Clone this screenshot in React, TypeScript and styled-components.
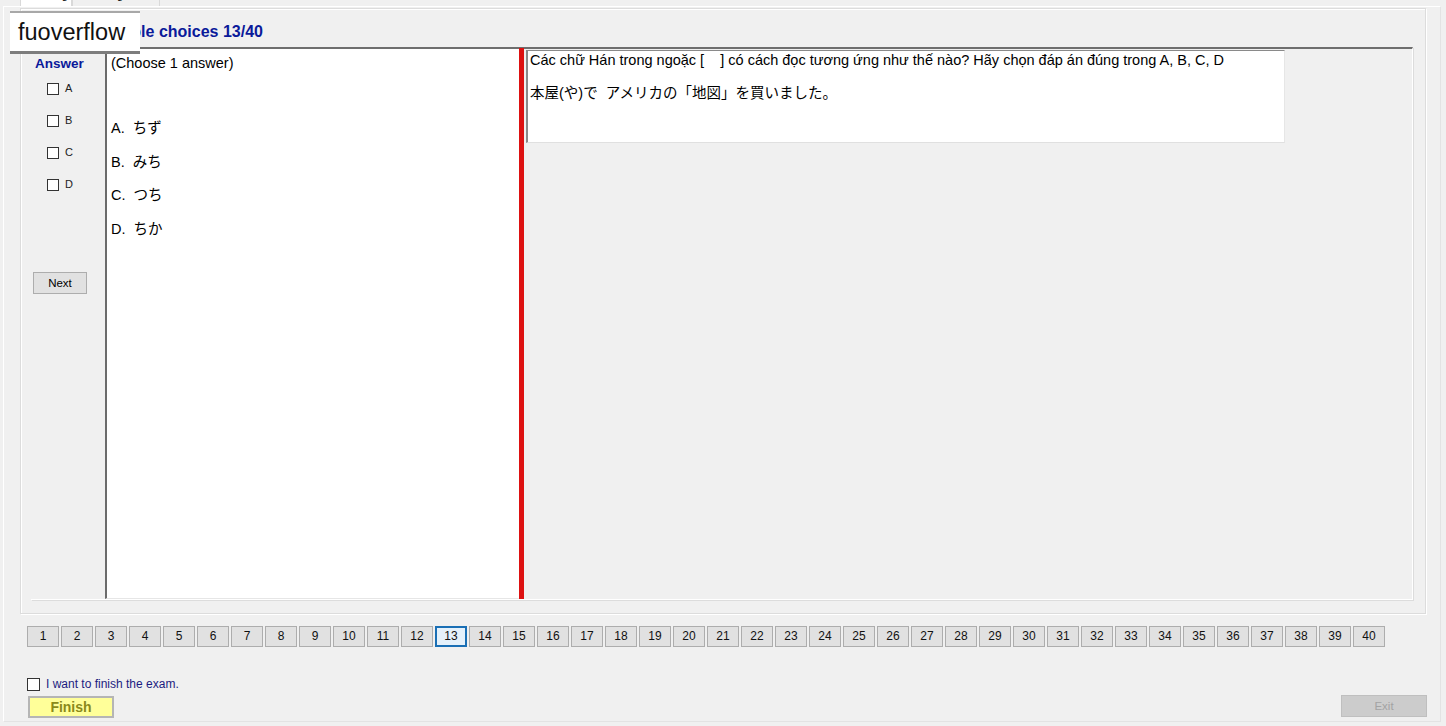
import React from 'react';
import styled, { createGlobalStyle } from 'styled-components';

const GlobalStyle = createGlobalStyle`
  html, body {
    margin: 0;
    padding: 0;
    background: #f0f0f0;
    overflow: hidden;
  }
  body {
    font-family: "Liberation Sans", Arial, "Noto Sans CJK JP", sans-serif;
    color: #000;
  }
`;

const Window = styled.div`
  width: 1446px;
  height: 726px;
  background: #f0f0f0;
  position: relative;
  overflow: hidden;
`;

const TabStrip = styled.div`
  display: flex;
  margin-left: 20px;
  margin-top: -14px;
  height: 20px;
`;

const Tab = styled.div<{ $active?: boolean }>`
  width: ${(p) => (p.$active ? 52 : 88)}px;
  height: 20px;
  box-sizing: border-box;
  border: 1px solid #d9d9d9;
  border-bottom: none;
  background: ${(p) => (p.$active ? '#fff' : '#f0f0f0')};
  font-size: 11px;
  padding: 2px 6px;
  color: #000;
`;

const TabPage = styled.div`
  margin-left: 3px;
  width: 1438px;
  height: 716px;
  box-sizing: border-box;
  border: 1px solid #fff;
  border-right-color: #e3e3e3;
  border-bottom-color: #e3e3e3;
  padding: 1px 0 0 16px;
  display: flex;
  flex-direction: column;
`;

const GroupBox = styled.div`
  width: 1406px;
  height: 606px;
  box-sizing: border-box;
  border: 1px solid #dcdcdc;
  box-shadow: inset 1px 1px 0 #fff, 1px 1px 0 #fff;
  padding: 14px 12px 13px 10px;
  display: flex;
  flex-direction: column;
  position: relative;
`;

const Title = styled.div`
  font-size: 16px;
  font-weight: bold;
  color: #0a1a9a;
  padding-left: 63px;
  height: 24px;
  line-height: 18px;
`;

const Watermark = styled.div`
  position: absolute;
  left: -11px;
  top: 4px;
  width: 130px;
  height: 38px;
  background: #fff;
  box-shadow: 0 -2px 0 #a8a8a8, 0 3px 0 #7d7d7d;
  font-size: 23.5px;
  line-height: 38px;
  padding-left: 8px;
  box-sizing: border-box;
  color: #111;
  z-index: 2;
`;

const Frame = styled.div`
  flex: 1;
  display: flex;
  border-top: 2px solid #6e6e6e;
  border-right: 1px solid #fff;
  border-bottom: 1px solid #fff;
  box-shadow: 1px 1px 0 #dcdcdc;
`;

const AnswerColumn = styled.div`
  width: 72px;
  display: flex;
  flex-direction: column;
  padding-top: 7px;
`;

const AnswerTitle = styled.div`
  font-size: 13.5px;
  font-weight: bold;
  color: #0a1a9a;
  padding-left: 4px;
  height: 26px;
`;

const OptionRow = styled.label`
  display: flex;
  align-items: flex-start;
  gap: 6px;
  padding-left: 16px;
  height: 32px;
  font-size: 11px;
  color: #222;
`;

const Box = styled.span<{ $size?: number }>`
  display: inline-block;
  width: ${(p) => p.$size ?? 12}px;
  height: ${(p) => p.$size ?? 12}px;
  box-sizing: border-box;
  border: 1px solid #333;
  background: #fff;
  margin-top: 1px;
  flex-shrink: 0;
`;

const NextButton = styled.div`
  margin: 62px 0 0 2px;
  width: 54px;
  height: 22px;
  box-sizing: border-box;
  border: 1px solid #adadad;
  background: #e1e1e1;
  font-size: 11.5px;
  text-align: center;
  line-height: 20px;
`;

const QuestionPanel = styled.div`
  width: 414px;
  margin-left: 2px;
  background: #fff;
  border-left: 2px solid #6b6b6b;
  border-bottom: 1px solid #e6e6e6;
  padding: 6px 0 0 4px;
  box-sizing: border-box;
  font-size: 14.5px;
`;

const Choose = styled.div`
  height: 64px;
`;

const ChoiceLine = styled.div`
  height: 33.5px;
  line-height: 18px;
  white-space: pre;
`;

const Divider = styled.div`
  width: 5px;
  margin-top: -1px;
  background: #dd1111;
`;

const RightArea = styled.div`
  flex: 1;
  padding: 1px 0 0 2px;
`;

const QuestionBox = styled.div`
  width: 759px;
  height: 93px;
  box-sizing: border-box;
  background: #fff;
  border-top: 1px solid #8a8a8a;
  border-left: 2px solid #8a8a8a;
  border-right: 1px solid #e6e6e6;
  border-bottom: 1px solid #e0e0e0;
  padding: 0 0 0 2px;
  font-size: 14.5px;
`;

const QuestionLine = styled.div`
  height: 33px;
  line-height: 18px;
`;

const NumberRow = styled.div`
  display: flex;
  gap: 2px;
  margin: 12px 0 0 7px;
`;

const NumButton = styled.div<{ $current?: boolean }>`
  width: 32px;
  height: 21px;
  box-sizing: border-box;
  border: ${(p) => (p.$current ? '2px solid #1a6fb5' : '1px solid #adadad')};
  background: ${(p) => (p.$current ? '#e5f1fb' : '#e1e1e1')};
  font-size: 12px;
  text-align: center;
  line-height: ${(p) => (p.$current ? 17 : 19)}px;
  color: #111;
`;

const Footer = styled.div`
  display: flex;
  justify-content: space-between;
  align-items: flex-end;
  margin-top: 30px;
  padding: 0 0 0 7px;
`;

const FinishGroup = styled.div`
  display: flex;
  flex-direction: column;
  gap: 5px;
`;

const FinishCheck = styled.label`
  display: flex;
  align-items: center;
  gap: 6px;
  font-size: 12px;
  color: #1c1c80;
`;

const FinishButton = styled.div`
  margin-left: 1px;
  margin-bottom: 1px;
  width: 86px;
  height: 22px;
  box-sizing: border-box;
  border: 2px solid #b5b5b5;
  background: #ffff99;
  color: #8a8a1a;
  font-weight: bold;
  font-size: 14px;
  line-height: 18px;
  text-align: center;
`;

const ExitButton = styled.div`
  width: 86px;
  height: 22px;
  box-sizing: border-box;
  border: 1px solid #bfbfbf;
  background: #cccccc;
  color: #a3a3a3;
  font-size: 11.5px;
  line-height: 20px;
  text-align: center;
  margin-right: 13px;
  margin-bottom: 2px;
`;

const options = ['A', 'B', 'C', 'D'];
const choices = ['A.  ちず', 'B.  みち', 'C.  つち', 'D.  ちか'];

export default function App() {
  return (
    <Window>
      <GlobalStyle />
      <TabStrip>
        <Tab $active>Reading</Tab>
        <Tab>Listening</Tab>
      </TabStrip>
      <TabPage>
        <GroupBox>
          <Watermark>fuoverflow</Watermark>
          <Title>Multiple choices 13/40</Title>
          <Frame>
            <AnswerColumn>
              <AnswerTitle>Answer</AnswerTitle>
              {options.map((o) => (
                <OptionRow key={o}>
                  <Box />
                  {o}
                </OptionRow>
              ))}
              <NextButton>Next</NextButton>
            </AnswerColumn>
            <QuestionPanel>
              <Choose>(Choose 1 answer)</Choose>
              {choices.map((c) => (
                <ChoiceLine key={c}>{c}</ChoiceLine>
              ))}
            </QuestionPanel>
            <Divider />
            <RightArea>
              <QuestionBox>
                <QuestionLine>
                  Các chữ Hán trong ngoặc [&nbsp;&nbsp;&nbsp;&nbsp;] có cách đọc tương ứng như thế nào? Hãy chọn đáp án đúng trong A, B, C, D
                </QuestionLine>
                <QuestionLine>本屋(や)で&nbsp;&nbsp;アメリカの「地図」を買いました。</QuestionLine>
              </QuestionBox>
            </RightArea>
          </Frame>
        </GroupBox>
        <NumberRow>
          {Array.from({ length: 40 }, (_, i) => i + 1).map((n) => (
            <NumButton key={n} $current={n === 13}>
              {n}
            </NumButton>
          ))}
        </NumberRow>
        <Footer>
          <FinishGroup>
            <FinishCheck>
              <Box $size={13} style={{ marginTop: 0 }} />
              I want to finish the exam.
            </FinishCheck>
            <FinishButton>Finish</FinishButton>
          </FinishGroup>
          <ExitButton>Exit</ExitButton>
        </Footer>
      </TabPage>
    </Window>
  );
}
